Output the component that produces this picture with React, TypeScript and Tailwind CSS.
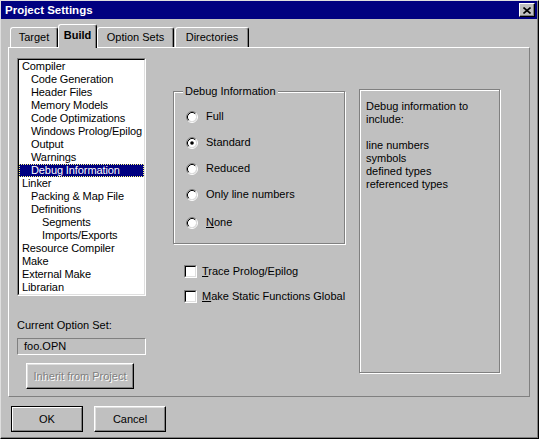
import React from "react";

type Item = { label: string; level: number; selected?: boolean };

const items: Item[] = [
  { label: "Compiler", level: 0 },
  { label: "Code Generation", level: 1 },
  { label: "Header Files", level: 1 },
  { label: "Memory Models", level: 1 },
  { label: "Code Optimizations", level: 1 },
  { label: "Windows Prolog/Epilog", level: 1 },
  { label: "Output", level: 1 },
  { label: "Warnings", level: 1 },
  { label: "Debug Information", level: 1, selected: true },
  { label: "Linker", level: 0 },
  { label: "Packing & Map File", level: 1 },
  { label: "Definitions", level: 1 },
  { label: "Segments", level: 2 },
  { label: "Imports/Exports", level: 2 },
  { label: "Resource Compiler", level: 0 },
  { label: "Make", level: 0 },
  { label: "External Make", level: 0 },
  { label: "Librarian", level: 0 },
];

function Radio({ checked }: { checked?: boolean }) {
  return (
    <svg width="12" height="12" viewBox="0 0 12 12" className="shrink-0">
      <circle cx="6" cy="6" r="4.2" fill="#ffffff" />
      <path d="M2.11 9.89 A5.5 5.5 0 0 1 9.89 2.11" fill="none" stroke="#808080" strokeWidth="1" />
      <path d="M9.89 2.11 A5.5 5.5 0 0 1 2.11 9.89" fill="none" stroke="#ffffff" strokeWidth="1" />
      <path d="M2.82 9.18 A4.5 4.5 0 0 1 9.18 2.82" fill="none" stroke="#000000" strokeWidth="1" />
      <path d="M9.18 2.82 A4.5 4.5 0 0 1 2.82 9.18" fill="none" stroke="#dfdfdf" strokeWidth="1" />
      {checked && <circle cx="6" cy="6" r="1.8" fill="#000000" />}
    </svg>
  );
}

function Check() {
  return (
    <div className="w-[13px] h-[13px] shrink-0 border-t border-l border-t-[#808080] border-l-[#808080] border-b border-r border-b-white border-r-white">
      <div className="w-full h-full bg-white border-t border-l border-t-black border-l-black border-b border-r border-b-[#dfdfdf] border-r-[#dfdfdf]" />
    </div>
  );
}

function Tab({ label, selected, w, extra }: { label: string; selected?: boolean; w: string; extra?: string }) {
  if (selected) {
    return (
      <div
        className={`${w} h-[24px] mb-[-1px] relative z-10 bg-[#c0c0c0] border-l border-t border-l-white border-t-white border-r border-r-black shadow-[inset_-1px_0_0_#808080] rounded-tl-[3px] rounded-tr-[3px] flex items-center justify-center pb-[3px] font-bold ${extra ?? ""}`}
      >
        {label}
      </div>
    );
  }
  return (
    <div
      className={`${w} h-[20px] bg-[#c0c0c0] border-l border-t border-l-white border-t-white border-r border-r-black shadow-[inset_-1px_0_0_#808080] rounded-tl-[3px] rounded-tr-[3px] flex items-center justify-center ${extra ?? ""}`}
    >
      {label}
    </div>
  );
}

export default function App() {
  return (
    <div className="w-[539px] h-[439px] bg-[#c0c0c0] border-t border-l border-t-[#dfdfdf] border-l-[#dfdfdf] border-r border-b border-r-black border-b-black shadow-[inset_-1px_-1px_0_#808080] flex flex-col font-['Liberation_Sans',Arial,sans-serif] text-[11px] leading-[13px] text-black select-none">
      {/* Title bar */}
      <div className="h-[18px] mr-[1px] bg-[#000080] flex items-center pl-[4px] pr-[2px]">
        <span className="text-white font-bold text-[11.5px] flex-1">Project Settings</span>
        <div className="w-[16px] h-[14px] bg-[#c0c0c0] border-t border-l border-t-white border-l-white border-r border-b border-r-black border-b-black shadow-[inset_-1px_-1px_0_#808080] flex items-center justify-center">
          <svg width="8" height="7" viewBox="0 0 8 7">
            <path d="M0.5 0.5 L7.5 6.5 M7.5 0.5 L0.5 6.5" stroke="#000" strokeWidth="1.6" fill="none" />
          </svg>
        </div>
      </div>

      {/* Tabs */}
      <div className="h-[23px] mt-[5px] flex items-end pl-[9px]">
        <Tab label="Target" w="w-[48px]" />
        <Tab label="Build" w="w-[39px]" selected />
        <Tab label="Option Sets" w="w-[77px]" />
        <Tab label="Directories" w="w-[74px]" extra="ml-[1px]" />
      </div>

      {/* Panel */}
      <div className="ml-[7px] w-[522px] h-[350px] border-l border-t border-l-white border-t-white border-r border-b border-r-[#808080] border-b-[#808080] flex items-start">
        {/* Left column */}
        <div className="ml-[8px] mt-[10px] w-[129px] flex flex-col">
          <div className="h-[238px] border-t border-l border-t-[#808080] border-l-[#808080] border-b border-r border-b-white border-r-white">
            <div className="h-full bg-white border-t border-l border-t-black border-l-black border-b border-r border-b-[#dfdfdf] border-r-[#dfdfdf] flex flex-col">
              {items.map((it) => (
                <div
                  key={it.label}
                  className={`h-[13px] leading-[13px] whitespace-nowrap tracking-[-0.1px] ${
                    it.level === 0 ? "pl-[3px]" : it.level === 1 ? "pl-[12px]" : "pl-[23px]"
                  } ${it.selected ? "bg-[#000080] text-white outline outline-1 outline-dotted outline-[#ffff80] -outline-offset-1" : ""}`}
                >
                  {it.label}
                </div>
              ))}
            </div>
          </div>
          <div className="mt-[23px] h-[13px] whitespace-nowrap">Current Option Set:</div>
          <div className="mt-[6px] h-[17px] border-t border-l border-t-[#808080] border-l-[#808080] border-b border-r border-b-white border-r-white flex items-center pl-[6px]">
            foo.OPN
          </div>
          <div className="mt-[8px] ml-[9px] w-[108px] h-[26px] border-t border-l border-t-white border-l-white border-r border-b border-r-black border-b-black shadow-[inset_-1px_-1px_0_#808080,inset_1px_1px_0_#dfdfdf] flex items-center justify-center whitespace-nowrap text-[#808080] [text-shadow:1px_1px_0_#ffffff]">
            Inherit from Project
          </div>
        </div>

        {/* Middle column */}
        <div className="ml-[27px] mt-[43px] w-[172px] flex flex-col">
          <div className="relative h-[153px] border border-[#808080] shadow-[inset_1px_1px_0_#ffffff,1px_1px_0_#ffffff] pt-[18px] pl-[12px]">
            <div className="absolute left-[9px] top-[-7px] px-[2px] bg-[#c0c0c0] h-[13px] whitespace-nowrap">Debug Information</div>
            <div className="flex items-center h-[13px] gap-[8px]">
              <Radio />
              <span>Full</span>
            </div>
            <div className="flex items-center h-[13px] gap-[8px] mt-[13px]">
              <Radio checked />
              <span>Standard</span>
            </div>
            <div className="flex items-center h-[13px] gap-[8px] mt-[13px]">
              <Radio />
              <span>Reduced</span>
            </div>
            <div className="flex items-center h-[13px] gap-[8px] mt-[13px]">
              <Radio />
              <span className="whitespace-nowrap">Only line numbers</span>
            </div>
            <div className="flex items-center h-[13px] gap-[8px] mt-[15px]">
              <Radio />
              <span>
                <u>N</u>one
              </span>
            </div>
          </div>
          <div className="flex items-center h-[13px] gap-[5px] mt-[21px] ml-[11px] whitespace-nowrap">
            <Check />
            <span>
              <u>T</u>race Prolog/Epilog
            </span>
          </div>
          <div className="flex items-center h-[13px] gap-[5px] mt-[12px] ml-[11px] whitespace-nowrap">
            <Check />
            <span>
              <u>M</u>ake Static Functions Global
            </span>
          </div>
        </div>

        {/* Right info box */}
        <div className="ml-[14px] mt-[41px] w-[141px] h-[284px] border border-[#808080] shadow-[inset_1px_1px_0_#ffffff,1px_1px_0_#ffffff] pt-[10px] pl-[6px]">
          <div>Debug information to</div>
          <div>include:</div>
          <div className="h-[13px]" />
          <div>line numbers</div>
          <div>symbols</div>
          <div>defined types</div>
          <div>referenced types</div>
        </div>
      </div>

      {/* Bottom buttons */}
      <div className="mt-[9px] ml-[10px] flex gap-[11px]">
        <div className="w-[72px] h-[26px] border border-black">
          <div className="w-full h-full border-t border-l border-t-white border-l-white border-r border-b border-r-[#808080] border-b-[#808080] flex items-center justify-center">
            OK
          </div>
        </div>
        <div className="w-[72px] h-[26px] border-t border-l border-t-white border-l-white border-r border-b border-r-black border-b-black shadow-[inset_-1px_-1px_0_#808080,inset_1px_1px_0_#dfdfdf] flex items-center justify-center">
          Cancel
        </div>
      </div>
    </div>
  );
}
